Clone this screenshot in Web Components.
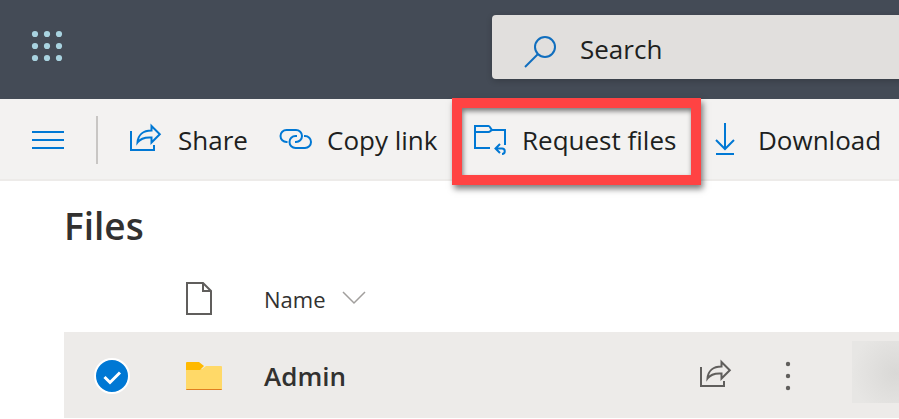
<!DOCTYPE html>
<html lang="en">
<head>
<meta charset="utf-8">
<meta name="viewport" content="width=device-width, initial-scale=1">
<title>Files</title>
<style>
body {
  margin: 0;
  background: #ffffff;
  color: #201f1e;
  font-family: "Open Sans", "Noto Sans", sans-serif;
  font-size: 26px;
  line-height: 32px;
  overflow-x: hidden;
}
</style>
</head>
<body>
<files-app></files-app>

<script>
const icons = {
  waffle: `<g fill="#a9d3e0" stroke="none">${[3, 15, 27].map((y) => [3, 15, 27].map((x) => `<circle cx="${x}" cy="${y}" r="3.1"/>`).join("")).join("")}</g>`,
  search: `<circle cx="21" cy="16" r="10"/><path d="M14 23L1 36"/>`,
  menu: `<path d="M0 8h32M0 16h32M0 24h32"/>`,
  share: `<path d="M1 7v19h23v-5"/><path d="M21.5 2l8.300 8.200-8.300 8.300v-5c-6.500-.5-11 1-14 5C8 11 13 6.500 21.500 6.500z"/>`,
  link: `<path d="M8.500 18H7.500a6 6 0 0 1 0-12H17a6 6 0 0 1 0 12h-1"/><path d="M18 12h-1.500a6 6 0 0 0 0 12H26a6 6 0 0 0 0-12h-1"/>`,
  request: `<path d="M16 24H1V2h13.500c2 0 2 4 4 4H31v15M1 8h13.500c2 0 2-2 4-2"/><path d="M26 20l-4.500 4.500L26 29M21.500 24.500h6.500a2.700 2.700 0 0 1 0 5.500"/>`,
  download: `<path d="M15-1v26M6 16l9 9 9-9M6 30h18"/>`,
  file: `<path d="M3 0h16l8 8v23H3zM19 0v8h8"/>`,
  chevron: `<path d="M1 9l11 11 11-11" stroke-width="1.500"/>`,
  more: `<g fill="currentColor" stroke="none"><circle cx="16" cy="4" r="2.200"/><circle cx="16" cy="16" r="2.200"/><circle cx="16" cy="28" r="2.200"/></g>`,
  folder: `<g stroke="none"><path fill="#ffd968" d="M2 9h16l4-3h15a1 1 0 0 1 1 1v22a1 1 0 0 1-1 1H3a1 1 0 0 1-1-1z"/><path fill="#ffb900" d="M3 2h12l5 4-4 4H2V3a1 1 0 0 1 1-1z"/><path fill="#e07f1f" d="M2 29h36a1 1 0 0 1-1 1H3a1 1 0 0 1-1-1z"/></g>`,
  check: `<path d="M8.500 17l5.500 5.500L24 12.500" stroke="#ffffff" stroke-width="3"/>`
};

class UiIcon extends HTMLElement {
  constructor() {
    super();
    this.attachShadow({ mode: "open" });
  }

  connectedCallback() {
    const width = this.getAttribute("width") || 32;
    this.shadowRoot.innerHTML = `
<style>
:host {
  display: inline-block;
  flex: none;
  vertical-align: top;
}
svg {
  display: block;
  overflow: visible;
}
</style>
<svg width="${width}" height="32" viewBox="0 0 ${width} 32" fill="none" stroke="currentColor" stroke-width="2" aria-hidden="true">${icons[this.getAttribute("name")]}</svg>
`;
  }
}

class SuiteHeader extends HTMLElement {
  constructor() {
    super();
    this.attachShadow({ mode: "open" });
    this.shadowRoot.innerHTML = `
<style>
:host {
  display: flex;
  align-items: center;
  padding: 15px 0 20px 32px;
  background: #444b56;
}
button {
  display: flex;
  padding: 0;
  border: none;
  background: none;
}
.search {
  flex: 1;
  display: flex;
  align-items: center;
  gap: 24px;
  height: 64px;
  margin-left: 428px;
  padding-left: 32px;
  border-radius: 4px 0 0 4px;
  background: #e1dfdd;
  box-shadow: 0 2px 6px rgba(0, 0, 0, 0.2);
  color: #106ebe;
}
input {
  flex: 1;
  min-width: 0;
  padding: 4px 0 0;
  border: none;
  outline: none;
  background: none;
  font: inherit;
  color: #201f1e;
}
input::placeholder {
  color: #201f1e;
  opacity: 1;
}
@media (max-width: 767px) {
  .search {
    margin-left: 64px;
  }
}
</style>
<button aria-label="App launcher"><ui-icon name="waffle"></ui-icon></button>
<label class="search">
  <ui-icon name="search"></ui-icon>
  <input type="text" placeholder="Search" aria-label="Search">
</label>
`;
  }
}

class CommandButton extends HTMLElement {
  constructor() {
    super();
    this.attachShadow({ mode: "open" });
  }

  connectedCallback() {
    this.shadowRoot.innerHTML = `
<style>
:host {
  display: flex;
  position: relative;
}
button {
  display: flex;
  align-items: center;
  gap: 16px;
  padding: 0;
  border: none;
  background: none;
  font: inherit;
  color: inherit;
  white-space: nowrap;
}
ui-icon {
  color: #0078d4;
}
:host([highlighted])::after {
  content: "";
  position: absolute;
  z-index: 1;
  inset: -3px -23px -6px -22px;
  border: 10px solid #ff4343;
  box-shadow: 2px 4px 6px rgba(0, 0, 0, 0.5), inset 1px 3px 5px rgba(0, 0, 0, 0.5);
  pointer-events: none;
}
</style>
<button><ui-icon name="${this.getAttribute("icon")}"></ui-icon><slot></slot></button>
`;
  }
}

class CommandBar extends HTMLElement {
  constructor() {
    super();
    this.attachShadow({ mode: "open" });
    this.shadowRoot.innerHTML = `
<style>
:host {
  display: grid;
  grid-template-columns: 32px 2px 117px 163px 204px auto;
  gap: 32px;
  height: 78px;
  padding: 2px 0 0 32px;
  border-bottom: 2px solid #edebe9;
  background: #f3f2f1;
}
.menu {
  display: flex;
  align-items: center;
  padding: 0;
  border: none;
  background: none;
  color: #0078d4;
}
.divider {
  align-self: center;
  height: 48px;
  background: #c8c6c4;
}
</style>
<button class="menu" aria-label="Menu"><ui-icon name="menu"></ui-icon></button>
<span class="divider"></span>
<slot></slot>
`;
  }
}

class RowCheck extends HTMLElement {
  constructor() {
    super();
    this.attachShadow({ mode: "open" });
    this.shadowRoot.innerHTML = `
<style>
:host {
  display: inline-block;
  vertical-align: top;
}
label {
  display: grid;
  place-items: center;
}
input, ui-icon {
  grid-area: 1 / 1;
}
input {
  appearance: none;
  box-sizing: border-box;
  width: 36px;
  height: 36px;
  margin: 0;
  border: 2px solid #ffffff;
  border-radius: 50%;
  background: #ffffff;
}
input:checked {
  background: #0078d4;
}
ui-icon {
  z-index: 1;
  pointer-events: none;
}
</style>
<label><input type="checkbox" checked aria-label="Select row"><ui-icon name="check"></ui-icon></label>
`;
  }
}

class FileList extends HTMLElement {
  constructor() {
    super();
    this.attachShadow({ mode: "open" });
    this.shadowRoot.innerHTML = `
<style>
:host {
  display: block;
  padding-left: 64px;
}
table {
  width: 100%;
  table-layout: fixed;
  border-collapse: collapse;
}
th, td {
  padding: 0;
  text-align: left;
  vertical-align: middle;
}
th {
  height: 66px;
  font-size: 22px;
  font-weight: 400;
}
td {
  height: 84px;
  padding-top: 2px;
  background: #edebe9;
}
.check {
  width: 96px;
  text-align: center;
}
.type {
  width: 56px;
  padding-left: 24px;
}
.name {
  padding-left: 24px;
}
.action {
  width: 72px;
  text-align: center;
}
.modified {
  width: 47px;
  padding-left: 28px;
}
td.modified {
  padding-top: 9px;
  height: 77px;
  vertical-align: top;
}
button {
  display: inline-flex;
  align-items: center;
  gap: 16px;
  padding: 0;
  border: none;
  background: none;
  font: inherit;
  color: #323130;
  vertical-align: top;
}
.type ui-icon, .action ui-icon {
  color: #605e5c;
}
.name ui-icon {
  color: #a19f9d;
}
a {
  color: #323130;
  font-weight: 600;
  text-decoration: none;
}
.blurred {
  height: 62px;
  background: radial-gradient(circle at 44px 32px, #d9d8d6, #e7e6e4 44px);
}
</style>
<table>
  <thead>
    <tr>
      <th class="check"></th>
      <th class="type"><ui-icon name="file"></ui-icon></th>
      <th class="name"><button>Name<ui-icon name="chevron" width="24"></ui-icon></button></th>
      <th class="action"></th>
      <th class="action"></th>
      <th class="modified"></th>
    </tr>
  </thead>
  <tbody>
    <tr>
      <td class="check"><row-check></row-check></td>
      <td class="type"><ui-icon name="folder" width="40"></ui-icon></td>
      <td class="name"><a href="#admin"><slot></slot></a></td>
      <td class="action"><button aria-label="Share"><ui-icon name="share"></ui-icon></button></td>
      <td class="action"><button aria-label="More actions"><ui-icon name="more"></ui-icon></button></td>
      <td class="modified"><div class="blurred"></div></td>
    </tr>
  </tbody>
</table>
`;
  }
}

class FilesApp extends HTMLElement {
  constructor() {
    super();
    this.attachShadow({ mode: "open" });
    this.shadowRoot.innerHTML = `
<style>
:host {
  display: block;
}
h1 {
  margin: 0;
  padding: 21px 0 16px 64px;
  font-size: 37px;
  line-height: 48px;
  font-weight: 600;
  color: #323130;
}
</style>
<suite-header></suite-header>
<command-bar>
  <command-button icon="share">Share</command-button>
  <command-button icon="link">Copy link</command-button>
  <command-button icon="request" highlighted>Request files</command-button>
  <command-button icon="download">Download</command-button>
</command-bar>
<main>
  <h1>Files</h1>
  <file-list>Admin</file-list>
</main>
`;
  }
}

window.customElements.define("ui-icon", UiIcon);
window.customElements.define("suite-header", SuiteHeader);
window.customElements.define("command-button", CommandButton);
window.customElements.define("command-bar", CommandBar);
window.customElements.define("row-check", RowCheck);
window.customElements.define("file-list", FileList);
window.customElements.define("files-app", FilesApp);
</script>
</body>
</html>
